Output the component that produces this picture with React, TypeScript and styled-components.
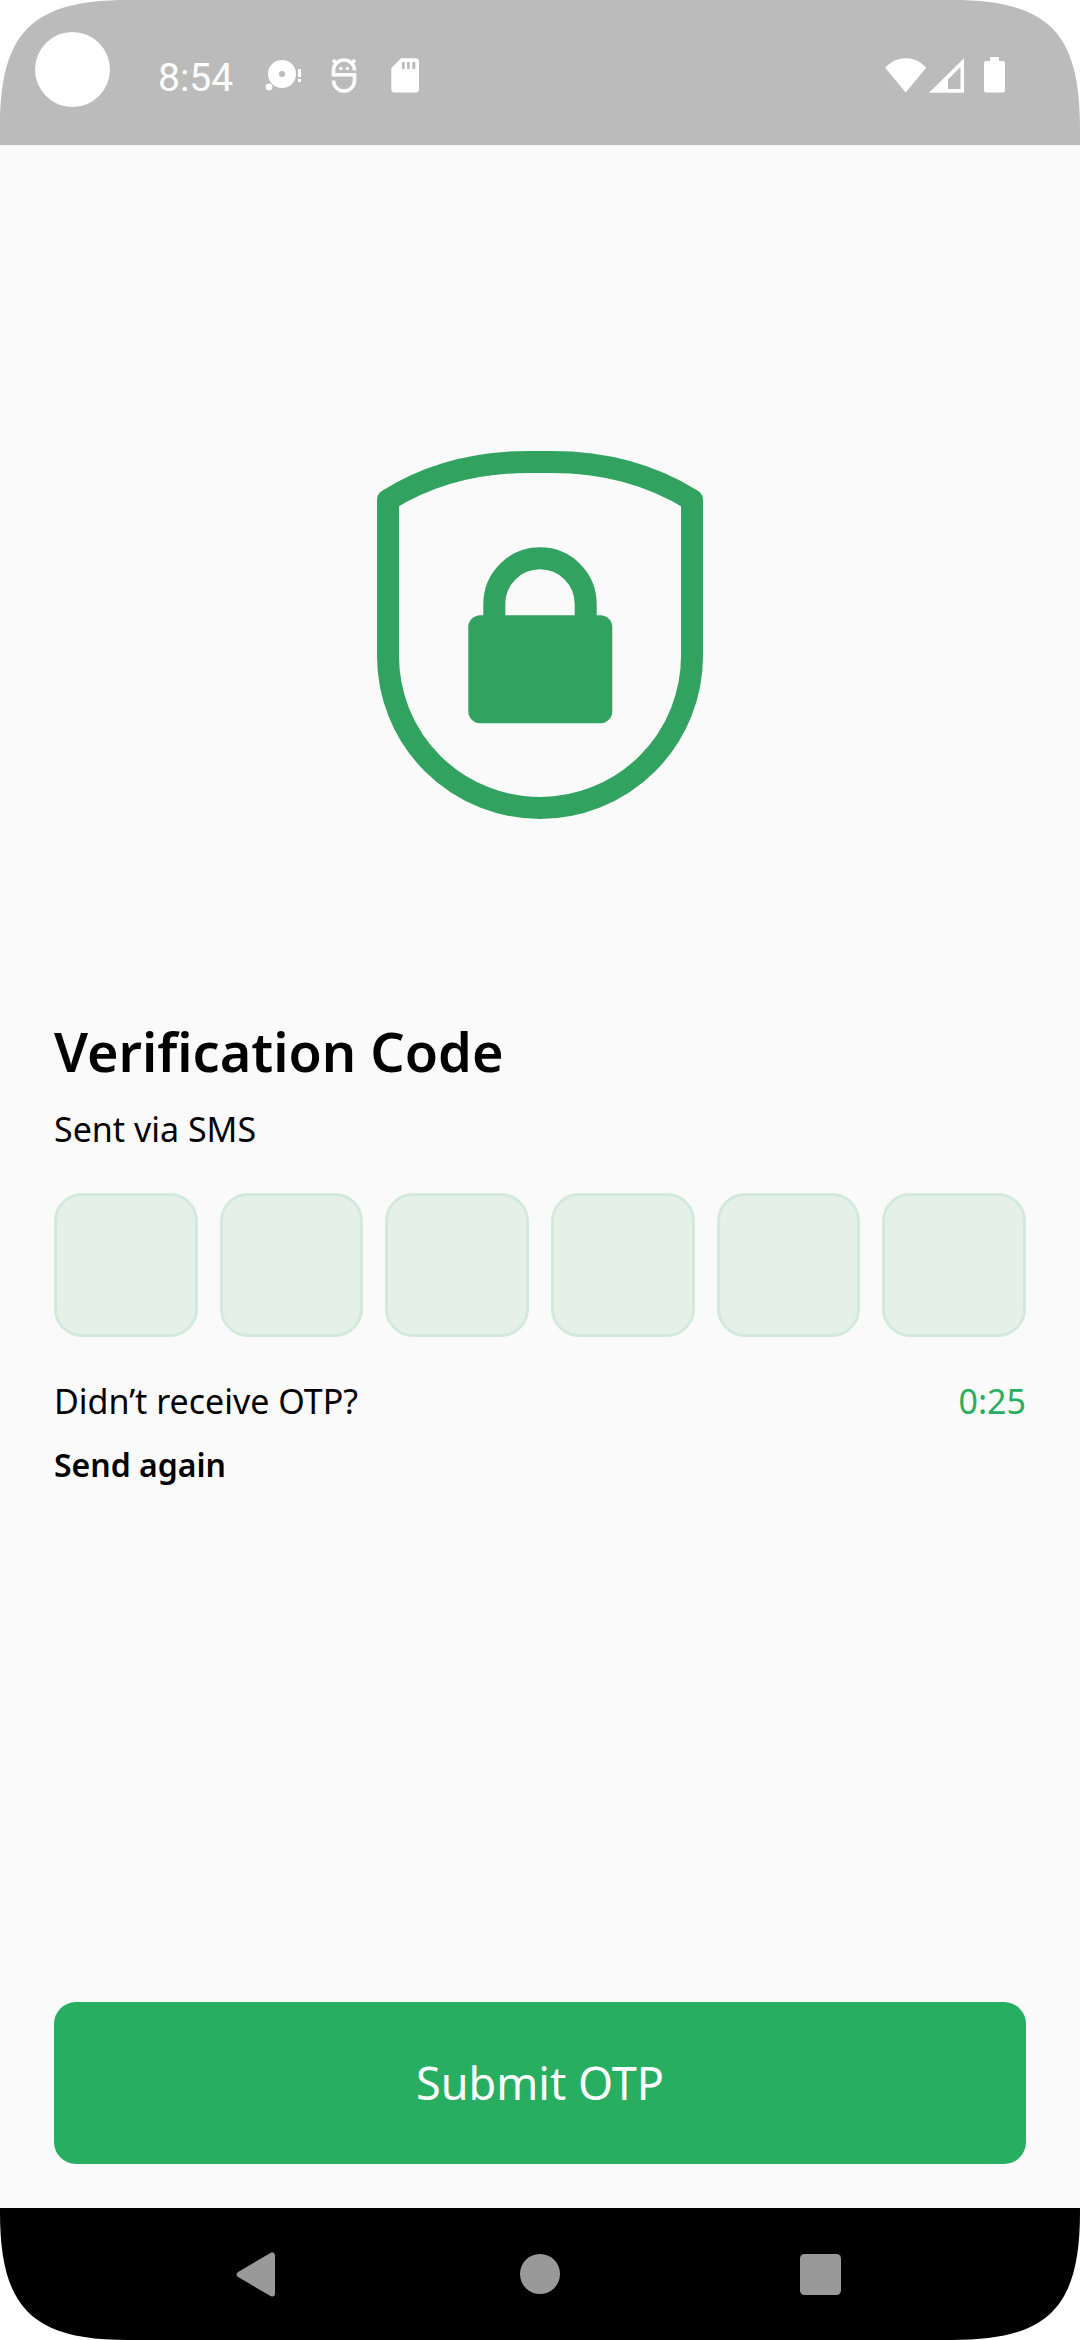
import React, { useState } from "react";
import styled, { createGlobalStyle } from "styled-components";

const GlobalStyle = createGlobalStyle`
  *, *::before, *::after { box-sizing: border-box; }
  body { margin: 0; background: #ffffff; }
  button, input { font: inherit; }
`;

const green = "#28ae61";

const Screen = styled.div`
  position: relative;
  display: flex;
  flex-direction: column;
  min-height: 100vh;
  background: #fafafa;
  color: #000000;
  font-family: "Noto Sans", "Open Sans", sans-serif;
`;

const StatusBar = styled.header`
  display: flex;
  justify-content: space-between;
  align-items: flex-start;
  height: 145px;
  padding: 57px 64px 0 158px;
  background: #bbbbbb;
  color: #ffffff;
`;

const StatusGroup = styled.div<{ $gap: number }>`
  display: flex;
  align-items: flex-start;
  gap: ${(p) => p.$gap}px;
`;

const Clock = styled.time`
  font-family: Roboto, sans-serif;
  font-size: 39px;
  line-height: 42px;
`;

const StatusIcon = styled.svg`
  display: block;
  height: 36px;
  fill: currentColor;
`;

const CameraCutout = styled.span`
  position: absolute;
  top: 32px;
  left: 35px;
  width: 75px;
  height: 75px;
  border-radius: 50%;
  background: #ffffff;
`;

const Corner = styled.svg<{ $right?: boolean; $bottom?: boolean }>`
  position: absolute;
  ${(p) => (p.$right ? "right" : "left")}: 0;
  ${(p) => (p.$bottom ? "bottom" : "top")}: 0;
  width: 128px;
  height: 128px;
  fill: #ffffff;
  transform: scale(${(p) => (p.$right ? -1 : 1)}, ${(p) => (p.$bottom ? -1 : 1)});
  pointer-events: none;
`;

const Form = styled.form`
  flex: 1;
  display: flex;
  flex-direction: column;
  padding: 304px 54px 44px;
`;

const Shield = styled.svg`
  display: block;
  align-self: center;
  width: 330px;
  height: 370px;
`;

const Title = styled.h1`
  margin: 200px 0 22px;
  font-size: 54px;
  font-weight: 600;
  line-height: 64px;
`;

const Text = styled.p`
  margin: 0;
  font-size: 34px;
  line-height: 48px;
`;

const CodeRow = styled.fieldset`
  display: grid;
  grid-template-columns: repeat(6, minmax(0, 1fr));
  gap: 22px;
  min-width: 0;
  margin: 40px 0;
  padding: 0;
  border: 0;
`;

const CodeInput = styled.input`
  width: 100%;
  aspect-ratio: 1;
  padding: 0;
  border: 3px solid #d4e9dd;
  border-radius: 28px;
  background: #e5f1e8;
  font-size: 54px;
  text-align: center;
  outline: none;
`;

const ResendRow = styled.div`
  display: flex;
  justify-content: space-between;
`;

const Countdown = styled.time`
  color: ${green};
  font-size: 34px;
  line-height: 48px;
`;

const ResendButton = styled.button`
  align-self: flex-start;
  margin: 16px 0 0;
  padding: 0;
  border: 0;
  background: none;
  color: inherit;
  font-size: 32px;
  font-weight: 600;
  line-height: 48px;
`;

const SubmitButton = styled.button`
  margin-top: auto;
  padding: 51px 24px;
  border: 0;
  border-radius: 22px;
  background: ${green};
  color: #ffffff;
  font-size: 45px;
  line-height: 60px;
`;

const NavBar = styled.nav`
  display: grid;
  grid-template-columns: repeat(3, 1fr);
  height: 132px;
  padding: 0 120px;
  background: #000000;
`;

const NavButton = styled.button`
  display: flex;
  align-items: center;
  justify-content: center;
  padding: 0;
  border: 0;
  background: none;
  color: #999999;
`;

const cornerPath = "M0 0H128C32 0 0 32 0 128Z";

export default function App() {
  const [code, setCode] = useState<string[]>(Array(6).fill(""));

  const setDigit = (index: number, value: string) =>
    setCode((digits) => digits.map((d, i) => (i === index ? value.replace(/\D/g, "") : d)));

  return (
    <Screen>
      <GlobalStyle />
      <StatusBar>
        <StatusGroup $gap={32}>
          <Clock>8:54</Clock>
          <StatusGroup $gap={28}>
            <StatusIcon width="38" viewBox="0 0 38 36" aria-hidden="true">
              <path fillRule="evenodd" d="M17 3a14 14 0 1 1 0 28a14 14 0 0 1 0-28ZM17 14a3 3 0 1 0 0 6a3 3 0 0 0 0-6Z" />
              <circle cx="4" cy="30" r="3.4" />
              <path d="M33 12h3v8h-3zM33 22h3v3h-3z" />
            </StatusIcon>
            <StatusIcon width="28" viewBox="0 0 28 36" aria-hidden="true">
              <path
                d="M23.500 13.500V13A10.500 10 0 0 0 2.500 13V17.800H23.500V23.500A10.500 10.500 0 0 1 2.500 23.500"
                fill="none"
                stroke="currentColor"
                strokeWidth="3.600"
              />
              <path d="M2 3L6 7M24 3L20 7" stroke="currentColor" strokeWidth="3.400" />
              <circle cx="9.800" cy="11.500" r="1.800" />
              <circle cx="16.500" cy="11.500" r="1.800" />
            </StatusIcon>
            <StatusIcon width="32" viewBox="0 0 32 36" aria-hidden="true">
              <path
                fillRule="evenodd"
                d="M14 1.300H29A3.300 3.300 0 0 1 32 4.500V32.500A3.300 3.300 0 0 1 29 35.500H7.500A3.300 3.300 0 0 1 4.300 32.500V11ZM15 5V12H17.700V5ZM20 5V12H22.700V5ZM25.300 5V12H28.300V5Z"
              />
            </StatusIcon>
          </StatusGroup>
        </StatusGroup>
        <StatusGroup $gap={0}>
          <StatusIcon width="44" viewBox="0 0 44 36" aria-hidden="true">
            <path d="M21.700 35.500L1 10.500Q10 1.300 21.700 1.300T42.300 10.500Z" />
          </StatusIcon>
          <StatusIcon width="44" viewBox="0 0 44 36" aria-hidden="true">
            <path fillRule="evenodd" d="M1 35.700L36 1.300V35.700ZM20 32H32.500V10L20 22.500Z" />
          </StatusIcon>
          <StatusIcon width="44" viewBox="0 0 44 36" aria-hidden="true">
            <path d="M18 0H27V4H31A2 2 0 0 1 33 6V33.500A2 2 0 0 1 31 35.500H14A2 2 0 0 1 12 33.500V6A2 2 0 0 1 14 4H18Z" />
          </StatusIcon>
        </StatusGroup>
      </StatusBar>
      <CameraCutout />

      <Form onSubmit={(e: React.FormEvent) => e.preventDefault()}>
        <Shield viewBox="15 19 330 370" aria-hidden="true">
          <path
            d="M28 70C68 45 114 32 168 32H192C246 32 292 45 332 70V226A152 152 0 0 1 28 226Z"
            fill="none"
            stroke="#32a260"
            strokeWidth="22"
            strokeLinejoin="round"
          />
          <path d="M134.300 188V174A45.700 45.700 0 0 1 225.700 174V188" fill="none" stroke="#32a260" strokeWidth="22" />
          <rect x="108.300" y="185.300" width="144" height="108" rx="12" fill="#32a260" />
        </Shield>

        <Title>Verification Code</Title>
        <Text>Sent via SMS</Text>

        <CodeRow>
          {code.map((digit, i) => (
            <CodeInput
              key={i}
              aria-label={`Digit ${i + 1}`}
              inputMode="numeric"
              maxLength={1}
              value={digit}
              onChange={(e) => setDigit(i, e.target.value)}
            />
          ))}
        </CodeRow>

        <ResendRow>
          <Text>Didn’t receive OTP?</Text>
          <Countdown>0:25</Countdown>
        </ResendRow>
        <ResendButton type="button">Send again</ResendButton>

        <SubmitButton type="submit">Submit OTP</SubmitButton>
      </Form>

      <NavBar>
        <NavButton type="button" aria-label="Back">
          <svg width="60" height="60" viewBox="0 0 60 60" fill="currentColor" stroke="currentColor" strokeWidth="6" strokeLinejoin="round">
            <path d="M42 11.500V49.500L9.700 30.500Z" />
          </svg>
        </NavButton>
        <NavButton type="button" aria-label="Home">
          <svg width="60" height="60" viewBox="0 0 60 60" fill="currentColor">
            <circle cx="30" cy="30" r="20" />
          </svg>
        </NavButton>
        <NavButton type="button" aria-label="Recent apps">
          <svg width="60" height="60" viewBox="0 0 60 60" fill="currentColor">
            <rect x="10" y="10" width="41" height="41" rx="4.500" />
          </svg>
        </NavButton>
      </NavBar>

      <Corner viewBox="0 0 128 128" aria-hidden="true"><path d={cornerPath} /></Corner>
      <Corner $right viewBox="0 0 128 128" aria-hidden="true"><path d={cornerPath} /></Corner>
      <Corner $bottom viewBox="0 0 128 128" aria-hidden="true"><path d={cornerPath} /></Corner>
      <Corner $right $bottom viewBox="0 0 128 128" aria-hidden="true"><path d={cornerPath} /></Corner>
    </Screen>
  );
}
